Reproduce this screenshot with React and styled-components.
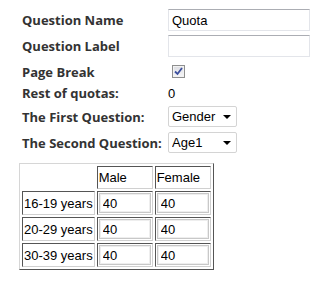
import React from "react";
import styled, { createGlobalStyle } from "styled-components";

const Global = createGlobalStyle`
  html, body { margin: 0; padding: 0; background: #fff; }
  body { font-family: "Liberation Sans", Arial, sans-serif; font-size: 13px; color: #000; }
`;

const Page = styled.div`
  padding: 7px 0 0 19px;
  width: 334px;
  height: 308px;
  box-sizing: border-box;
`;

const FieldRow = styled.div`
  display: flex;
  align-items: center;
  height: ${(p) => p.$h}px;
  padding-left: 3px;
`;

const Label = styled.div`
  width: 146px;
  flex: none;
  font-family: "Open Sans", "Noto Sans", sans-serif;
  font-weight: 700;
  font-size: 13px;
  color: #333;
  white-space: nowrap;
`;

const TextInput = styled.input`
  box-sizing: border-box;
  width: 142px;
  height: 22px;
  margin: 0;
  padding: 0 3px;
  border: 1px solid #e3e5ea;
  border-top-color: #abadb3;
  font-family: "Liberation Sans", Arial, sans-serif;
  font-size: 13px;
  color: #000;
  outline: none;
`;

const CheckBox = styled.span`
  box-sizing: border-box;
  display: inline-flex;
  align-items: center;
  justify-content: center;
  width: 13px;
  height: 13px;
  margin-left: 4px;
  border: 1px solid #8e8f8f;
  background: linear-gradient(#dcdde2, #f6f6f8);
  box-shadow: inset 0 0 0 1px #f2f2f2;
`;

const Value = styled.span`
  font-family: "Liberation Sans", Arial, sans-serif;
  font-size: 13px;
  color: #000;
`;

const SelectWrap = styled.div`
  position: relative;
  width: 69px;
  height: 21px;
`;

const Select = styled.select`
  appearance: none;
  -webkit-appearance: none;
  box-sizing: border-box;
  width: 100%;
  height: 100%;
  margin: 0;
  padding: 0 0 0 3px;
  border: 1px solid #d4d4d4;
  border-radius: 2px;
  background: #fff;
  font-family: "Liberation Sans", Arial, sans-serif;
  font-size: 13px;
  color: #000;
  outline: none;
`;

const Arrow = styled.span`
  position: absolute;
  right: 6px;
  top: 9px;
  width: 0;
  height: 0;
  border-left: 4px solid transparent;
  border-right: 4px solid transparent;
  border-top: 4px solid #000;
  pointer-events: none;
`;

const QuotaTable = styled.table`
  margin-top: 9px;
  border-collapse: separate;
  border-spacing: 2px;
  border: 1px solid;
  border-color: #d6d6d6 #555 #555 #d6d6d6;
`;

const Cell = styled.td`
  padding: 1px;
  height: ${(p) => p.$h}px;
  border: ${(p) => (p.$empty ? "1px solid transparent" : "1px solid")};
  border-color: ${(p) => (p.$empty ? "transparent" : "#555 #d0d0d0 #d0d0d0 #555")};
  font-family: "Liberation Sans", Arial, sans-serif;
  font-size: 13px;
  color: #000;
  white-space: nowrap;
  vertical-align: middle;
  text-align: left;
`;

const CellInput = styled.input`
  display: block;
  box-sizing: border-box;
  width: 52px;
  height: 20px;
  margin: 0;
  padding: 0 3px;
  border: 1px solid #c8c8c8;
  box-shadow: inset 0 0 0 1px #eeeeee;
  font-family: "Liberation Sans", Arial, sans-serif;
  font-size: 13px;
  color: #000;
  outline: none;
`;

const rows = ["16-19 years", "20-29 years", "30-39 years"];

export default function App() {
  return (
    <>
      <Global />
      <Page>
        <FieldRow $h={26}>
          <Label>Question Name</Label>
          <TextInput defaultValue="Quota" />
        </FieldRow>
        <FieldRow $h={26}>
          <Label>Question Label</Label>
          <TextInput defaultValue="" />
        </FieldRow>
        <FieldRow $h={25}>
          <Label>Page Break</Label>
          <CheckBox>
            <svg width="9" height="9" viewBox="0 0 9 9">
              <path d="M1 4.5 L3.5 7 L8 1" fill="none" stroke="#3c4f9e" strokeWidth="1.8" />
            </svg>
          </CheckBox>
        </FieldRow>
        <FieldRow $h={18}>
          <Label>Rest of quotas:</Label>
          <Value>0</Value>
        </FieldRow>
        <FieldRow $h={29}>
          <Label>The First Question:</Label>
          <SelectWrap>
            <Select defaultValue="Gender">
              <option>Gender</option>
            </Select>
            <Arrow />
          </SelectWrap>
        </FieldRow>
        <FieldRow $h={23}>
          <Label>The Second Question:</Label>
          <SelectWrap>
            <Select defaultValue="Age1">
              <option>Age1</option>
            </Select>
            <Arrow />
          </SelectWrap>
        </FieldRow>
        <QuotaTable>
          <tbody>
            <tr>
              <Cell $empty $h={19}></Cell>
              <Cell $h={19}>Male</Cell>
              <Cell $h={19}>Female</Cell>
            </tr>
            {rows.map((r) => (
              <tr key={r}>
                <Cell $h={20}>{r}</Cell>
                <Cell $h={20}>
                  <CellInput defaultValue="40" />
                </Cell>
                <Cell $h={20}>
                  <CellInput defaultValue="40" />
                </Cell>
              </tr>
            ))}
          </tbody>
        </QuotaTable>
      </Page>
    </>
  );
}
